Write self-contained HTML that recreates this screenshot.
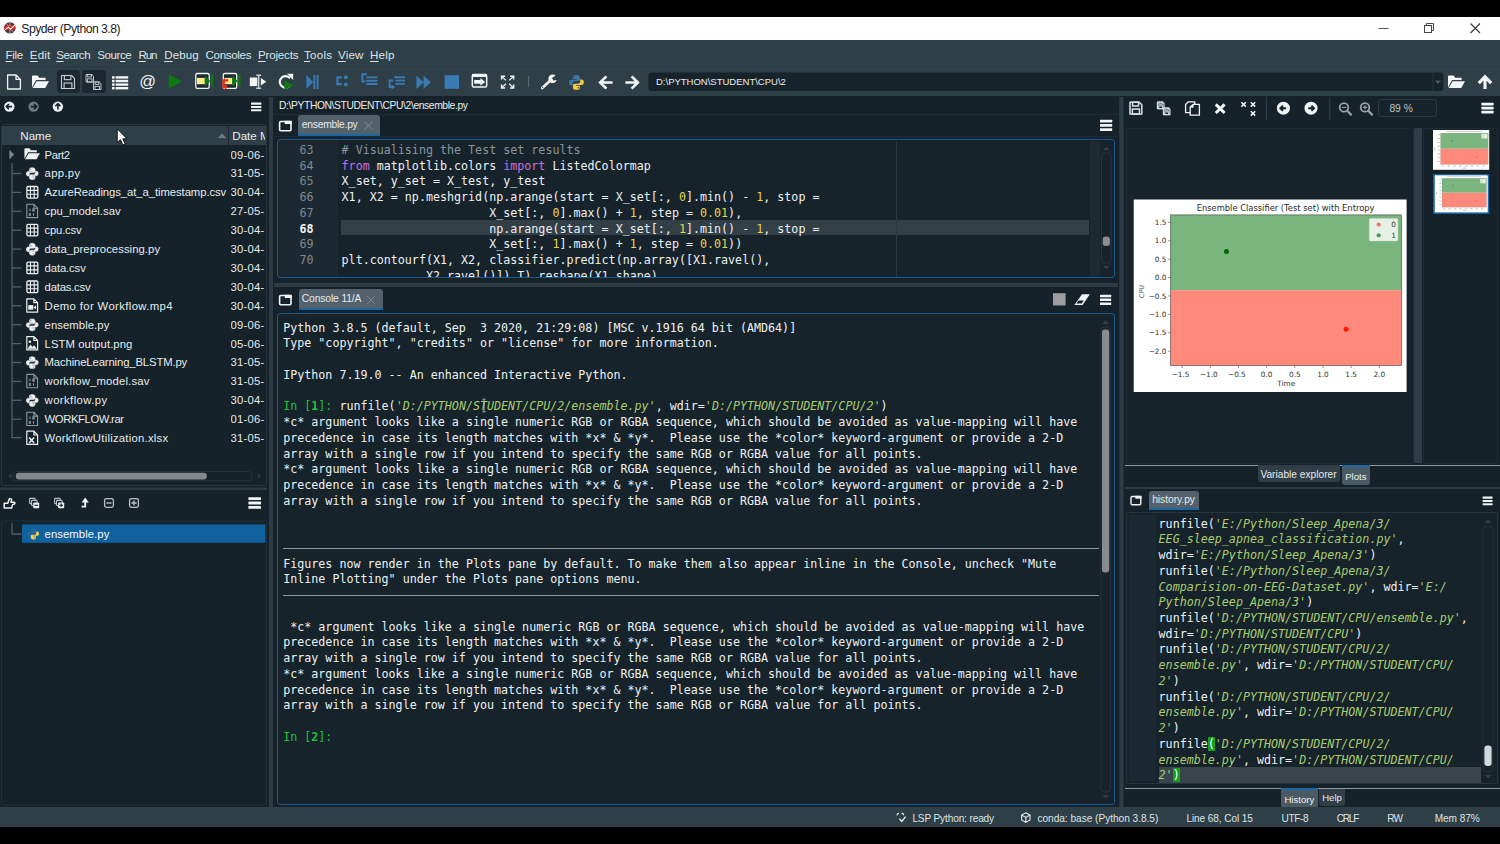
<!DOCTYPE html>
<html lang="en"><head><meta charset="utf-8"><title>Spyder (Python 3.8)</title>
<style>
*{box-sizing:border-box;margin:0;padding:0}
html,body{width:1500px;height:844px;overflow:hidden;background:#000}
body{position:relative;font-family:"Liberation Sans",sans-serif;color:#e4e8ea;font-size:11.3px}
.a{position:absolute}
.t{position:absolute;white-space:pre;line-height:1}
.mono{font-family:"DejaVu Sans Mono","Liberation Mono",monospace;font-size:11.68px;line-height:15.73px;white-space:pre}
svg{position:absolute;overflow:visible}
#title{left:0;top:17px;width:1500px;height:23px;background:#fff}
#menubar{left:0;top:40px;width:1500px;height:27px;background:#2e3f47;border-bottom:1px solid #2a3a42}
#toolbar{left:0;top:67px;width:1500px;height:28.6px;background:#2e3f47}
#main{left:0;top:95.6px;width:1500px;height:712px;background:#15222a}
#status{left:0;top:807.4px;width:1500px;height:19.8px;background:#2e3f47}
.mi{position:absolute;top:7.6px;font-size:11.6px;color:#dfe4e6;line-height:14px;white-space:pre}
.mi u{text-decoration-thickness:1px;text-underline-offset:1.5px}
.tab{position:absolute;background:#52616b;color:#e6eaec;border-radius:3px 3px 0 0;border-bottom:2px solid #1868a6;font-size:9.6px;white-space:pre}
.frame{position:absolute;border:1px solid #1c5a8f;border-radius:3px;background:#16232b}
.hist i{color:#a9cd6e}.pm{background:#12a022;color:#fff}.k{color:#c670e0}.n{color:#e7d64a}.c{color:#8a949c}.s{color:#a9cd6e;font-style:italic}.g{color:#22c13a}
.row{position:absolute;left:0;width:266px;height:19px}
.row .nm{position:absolute;left:44.5px;top:3.5px;font-size:11.2px;line-height:12px;white-space:pre;color:#e6eaec}
.row .dt{position:absolute;left:230.5px;top:3.5px;font-size:11.6px;line-height:12px;white-space:pre;color:#e6eaec;width:36px;overflow:hidden}
.st{position:absolute;top:5.9px;font-size:10.1px;line-height:11px;color:#dfe4e6;white-space:pre}
</style></head>
<body>
<div class="a" id="title">
<svg style="left:3.7px;top:4.8px" width="11.8" height="11.8" viewBox="0 0 12.4 12.4"><defs><clipPath id="spc"><circle cx="6.2" cy="6.2" r="6"/></clipPath></defs><g clip-path="url(#spc)"><rect width="12.4" height="12.4" fill="#3d3d40"/><path d="M0 4 L6 3 L12.4 3.4 V7.6 L6.4 8.6 L0 8.4 Z" fill="#e0231f"/><path d="M1.4 8 L4.6 5.4 L6.8 7.6 L11.4 3.2" stroke="#fff" stroke-width="1.1" fill="none"/><path d="M6.2 0 V4 M6.2 8.6 V12.4 M2 1.4 L5 4.4 M10.6 11 L7.6 8.4" stroke="#c9c9c9" stroke-width="0.8" fill="none"/></g></svg>
<div class="t" style="left:21.3px;top:6.2px;font-size:12.2px;letter-spacing:-0.506px;color:#222;line-height:13px">Spyder (Python 3.8)</div>
<svg style="left:1378px;top:5px" width="12" height="12"><path d="M0.5 6.5 H10.5" stroke="#555" stroke-width="1"/></svg>
<svg style="left:1424px;top:6px" width="12" height="12"><rect x="0.5" y="2.5" width="7" height="7" fill="none" stroke="#444" stroke-width="1"/><path d="M2.5 2.5 V0.5 H9.5 V7.5 H7.5" fill="none" stroke="#444" stroke-width="1"/></svg>
<svg style="left:1470px;top:6px" width="12" height="12"><path d="M0.5 0.5 L10 10 M10 0.5 L0.5 10" stroke="#333" stroke-width="1.1"/></svg>
</div>
<div class="a" id="menubar">
<span class="mi" style="left:5.6px;letter-spacing:-0.331px"><u>F</u>ile</span><span class="mi" style="left:29.8px;letter-spacing:0.170px"><u>E</u>dit</span><span class="mi" style="left:56.3px;letter-spacing:-0.491px"><u>S</u>earch</span><span class="mi" style="left:97.2px;letter-spacing:-0.431px">Sour<u>c</u>e</span><span class="mi" style="left:138.4px;letter-spacing:-1.090px"><u>R</u>un</span><span class="mi" style="left:164.2px;letter-spacing:0.054px"><u>D</u>ebug</span><span class="mi" style="left:205.5px;letter-spacing:-0.337px">C<u>o</u>nsoles</span><span class="mi" style="left:258px;letter-spacing:-0.201px"><u>P</u>rojects</span><span class="mi" style="left:304px;letter-spacing:0.230px"><u>T</u>ools</span><span class="mi" style="left:338px;letter-spacing:0.188px"><u>V</u>iew</span><span class="mi" style="left:370px;letter-spacing:0.214px"><u>H</u>elp</span>
</div>
<div class="a" id="main"></div>
<div class="a" id="toolbar"></div>
<div class="a" style="left:57px;top:70px;width:23px;height:23px;background:#1c2831;border-radius:3px"></div><div class="a" style="left:82px;top:70px;width:24px;height:23px;background:#1c2831;border-radius:3px"></div>
<svg style="left:0;top:0" width="1500" height="100" viewBox="0 0 1500 100">
<path d="M7.6 75 H16 L20.4 79.4 V89 H7.6 Z M16 75 V79.4 H20.4" fill="none" stroke="#f2f4f5" stroke-width="1.3" stroke-linejoin="round"/>
<path d="M32 87.375 V76.5 Q32 75.5 33.02 75.5 H37.61 L39.14 77.625 H45.6 V80.0 H36.08 Z" fill="#f2f4f5"/><path d="M32.68 88.0 L36.59 81.25 H49 L45.26 88.0 Z" fill="#f2f4f5"/>
<path d="M61.5 75.5 H71.64 L74.5 78.36 V88.5 H61.5 Z" fill="none" stroke="#c9d0d4" stroke-width="1.1" stroke-linejoin="round"/><rect x="64.36" y="75.5" width="6.5" height="4.16" fill="none" stroke="#c9d0d4" stroke-width="1.1"/><rect x="64.1" y="83.03999999999999" width="7.8" height="5.46" fill="none" stroke="#c9d0d4" stroke-width="1.1"/>
<path d="M86 74.5 H91.85 L93.5 76.15 V82.0 H86 Z" fill="none" stroke="#c9d0d4" stroke-width="0.9" stroke-linejoin="round"/><rect x="87.65" y="74.5" width="3.75" height="2.4" fill="none" stroke="#c9d0d4" stroke-width="0.9"/><rect x="87.5" y="78.85" width="4.5" height="3.15" fill="none" stroke="#c9d0d4" stroke-width="0.9"/><path d="M93.5 82 H99.35 L101.0 83.65 V89.5 H93.5 Z" fill="none" stroke="#c9d0d4" stroke-width="0.9" stroke-linejoin="round"/><rect x="95.15" y="82" width="3.75" height="2.4" fill="none" stroke="#c9d0d4" stroke-width="0.9"/><rect x="95.0" y="86.35" width="4.5" height="3.15" fill="none" stroke="#c9d0d4" stroke-width="0.9"/>
<rect x="112" y="76.2" width="2.6" height="2.4" fill="#f2f4f5"/><rect x="115.6" y="76.2" width="12.6" height="2.4" fill="#f2f4f5"/><rect x="112" y="79.8" width="2.6" height="2.4" fill="#f2f4f5"/><rect x="115.6" y="79.8" width="12.6" height="2.4" fill="#f2f4f5"/><rect x="112" y="83.4" width="2.6" height="2.4" fill="#f2f4f5"/><rect x="115.6" y="83.4" width="12.6" height="2.4" fill="#f2f4f5"/><rect x="112" y="87.0" width="2.6" height="2.4" fill="#f2f4f5"/><rect x="115.6" y="87.0" width="12.6" height="2.4" fill="#f2f4f5"/>
<text x="139.3" y="87" font-family="Liberation Sans, sans-serif" font-size="16.5" fill="#f2f4f5">@</text>
<path d="M168.8 74.6 L182 81.6 L168.8 88.7 Z" fill="#0c7a10"/>
<rect x="195.79999999999998" y="73.5" width="13.4" height="14.8" rx="1.6" fill="#1f2b34" stroke="#f2f4f5" stroke-width="1.3"/><rect x="197.0" y="77.9" width="7.8" height="6.3" fill="#fbeb82"/><path d="M204.79999999999998 76.3 H205.9 L210.1 81 L205.9 85.7 H204.79999999999998 Z" fill="#0c7a10"/><rect x="210.9" y="74.4" width="2.1" height="12" fill="#0c7a10"/>
<rect x="223.29999999999998" y="73.5" width="13.4" height="14.8" rx="1.6" fill="#1f2b34" stroke="#f2f4f5" stroke-width="1.3"/><rect x="224.5" y="77.9" width="7.8" height="6.3" fill="#fbeb82"/><path d="M232.29999999999998 76.3 H233.4 L237.6 81 L233.4 85.7 H232.29999999999998 Z" fill="#0c7a10"/><rect x="238.4" y="74.4" width="2.1" height="12" fill="#0c7a10"/><path d="M228.2 80.3 H223.5 V86.8 H225" fill="none" stroke="#f3281c" stroke-width="2.3"/><path d="M224.6 84 L228.2 87 L224.6 90 Z" fill="#f3281c"/>
<rect x="249.8" y="77.5" width="7.6" height="8.6" fill="#f2f4f5"/><path d="M258.7 75.2 V88.2 M256.2 75.2 H261.2 M256.2 88.2 H261.2" stroke="#c9cfd3" stroke-width="1.4" fill="none"/><path d="M260.8 78 L266.4 81.8 L260.8 85.6 Z" fill="#f2f4f5"/>
<path d="M290 78.4 A5.7 5.7 0 1 0 290.6 84.4" fill="none" stroke="#f2f4f5" stroke-width="2.2"/><path d="M287 73.8 H293.2 V80 Z" fill="#f2f4f5"/><path d="M284.4 80.6 L293.6 85.2 L284.4 90 Z" fill="#0c7a10"/>
<path d="M306.4 75 L313 82 L306.4 89 Z" fill="#3a7ab3"/><rect x="313.3" y="75" width="2" height="14" fill="#3a7ab3"/><rect x="316.6" y="75" width="2" height="14" fill="#3a7ab3"/>
<path d="M341.8 77.4 H337.4 V84.2 H341.8" fill="none" stroke="#3a7ab3" stroke-width="2.2"/><circle cx="345.8" cy="77.2" r="1.9" fill="#3a7ab3"/><circle cx="345.8" cy="84.4" r="1.9" fill="#3a7ab3"/>
<path d="M367 74.2 H362.4 V81.6 H365.4" fill="none" stroke="#3a7ab3" stroke-width="2"/><path d="M366.4 77.4 H377.4 M366.4 80.7 H377.4 M366.4 84 H377.4" stroke="#3a7ab3" stroke-width="1.9"/>
<path d="M393.2 80.6 H389.6 V87 H392" fill="none" stroke="#3a7ab3" stroke-width="2"/><path d="M391.6 84.4 L395.2 87 L391.6 89.6 Z" fill="#3a7ab3"/><path d="M394.4 77.3 H405 M395.4 80.6 H405 M395.4 83.9 H405" stroke="#3a7ab3" stroke-width="1.9"/>
<path d="M416.4 75.4 L423.6 82.2 L416.4 89 Z M423.6 75.4 L430.8 82.2 L423.6 89 Z" fill="#3a7ab3"/>
<rect x="444.6" y="75.2" width="14.4" height="13.6" fill="#3a7ab3"/>
<rect x="472.3" y="74.5" width="14.4" height="12.6" rx="1.4" fill="none" stroke="#f2f4f5" stroke-width="1.5"/><rect x="472" y="74" width="15" height="3" fill="#f2f4f5"/><path d="M474.2 80 H480.4 V78 L485.2 81.9 L480.4 85.8 V83.8 H474.2 Z" fill="#f2f4f5"/>
<path d="M501.6 79.6 V76.2 H505.2 M510 76.2 H513.6 V79.6 M513.6 84.6 V88 H510 M505.2 88 H501.6 V84.6" fill="none" stroke="#f2f4f5" stroke-width="1.5"/><path d="M502 76.6 L506 80.4 M513.2 76.6 L509.2 80.4 M513.2 87.6 L509.2 83.8 M502 87.6 L506 83.8" stroke="#f2f4f5" stroke-width="1.3"/>
<rect x="528" y="76" width="1.2" height="11" fill="#55646d"/>
<path d="M542.2 88 L550.6 80.2" stroke="#f2f4f5" stroke-width="2.6" stroke-linecap="round"/><path d="M555.6 75.6 A4.3 4.3 0 1 0 556.8 80 L553.4 80.4 L552 78 Z" fill="#f2f4f5"/><circle cx="542.6" cy="87.6" r="0.7" fill="#2f3f47"/>
<path d="M576.31 75.00 C573.16 75.00 572.88 76.30 572.88 77.41 V79.07 H576.59 V79.72 H571.40 C569.55 79.72 569.00 81.11 569.00 82.58 C569.00 84.06 569.55 85.36 571.22 85.36 H572.61 V83.33 C572.61 82.03 573.62 81.11 574.92 81.11 H578.07 C579.17 81.11 579.91 80.27 579.91 79.25 V77.41 C579.91 75.92 578.80 75.00 576.31 75.00 Z" fill="#3a7ab3"/><circle cx="574.46" cy="77.03" r="0.74" fill="#2f3f47"/><path d="M576.49 89.80 C579.64 89.80 579.91 88.50 579.91 87.39 V85.73 H576.22 V85.08 H581.39 C583.25 85.08 583.80 83.69 583.80 82.22 C583.80 80.73 583.25 79.44 581.58 79.44 H580.19 V81.47 C580.19 82.77 579.17 83.69 577.88 83.69 H574.74 C573.62 83.69 572.88 84.53 572.88 85.55 V87.39 C572.88 88.88 574.00 89.80 576.49 89.80 Z" fill="#f4c93c"/><circle cx="578.34" cy="87.77" r="0.74" fill="#2f3f47"/>
<path d="M612.6 82.5 H601.4 M606.4 76.4 L600.2 82.5 L606.4 88.6" fill="none" stroke="#f2f4f5" stroke-width="2.7" stroke-linejoin="miter"/>
<path d="M625.4 82.5 H636.6 M631.6 76.4 L637.8 82.5 L631.6 88.6" fill="none" stroke="#f2f4f5" stroke-width="2.7"/>
<rect x="648.4" y="72.4" width="795" height="18.6" rx="3" fill="#16232b"/>
<rect x="1432.6" y="72.4" width="1" height="18.6" fill="#25333c"/><path d="M1435 80.6 L1438 84 L1441 80.6 Z" fill="#4c5a63"/>
<text x="656" y="85" font-family="Liberation Sans, sans-serif" font-size="9.5" fill="#e8ecee">D:\PYTHON\STUDENT\CPU\2</text>
<path d="M1448 87.375 V76.5 Q1448 75.5 1449.02 75.5 H1453.61 L1455.14 77.625 H1461.6 V80.0 H1452.08 Z" fill="#f2f4f5"/><path d="M1448.68 88.0 L1452.59 81.25 H1465 L1461.26 88.0 Z" fill="#f2f4f5"/>
<path d="M1485 89 V78 M1478.8 83.2 L1485 76.8 L1491.2 83.2" fill="none" stroke="#f2f4f5" stroke-width="3.1"/>
</svg>
<div class="a" style="left:268.6px;top:97px;width:4.5px;height:710.4px;background:#2d3b44"></div>
<div class="a" style="left:1px;top:123.5px;width:266px;height:362px;border:1px solid #26343e;border-radius:3px"></div>
<div class="a" style="left:2px;top:125.6px;width:264px;height:19.5px;background:#2f3f48"></div>
<div class="a" style="left:228px;top:126px;width:1px;height:19px;background:#1b2730"></div>
<div class="t" style="left:20.3px;top:130px;font-size:11.6px;color:#e8ecee">Name</div><div class="t" style="left:232.3px;top:130px;font-size:11.6px;color:#e8ecee;width:33px;overflow:hidden">Date Modified</div>
<div class="t" style="left:44.6px;top:149.5px;font-size:11.3px;letter-spacing:-0.377px;color:#e6eaec">Part2</div><div class="t" style="left:230.6px;top:149.5px;font-size:11.3px;letter-spacing:0.2px;color:#e6eaec;width:35px;overflow:hidden">09-06-</div>
<div class="t" style="left:44.6px;top:168.4px;font-size:11.3px;letter-spacing:0.314px;color:#e6eaec">app.py</div><div class="t" style="left:230.6px;top:168.4px;font-size:11.3px;letter-spacing:0.2px;color:#e6eaec;width:35px;overflow:hidden">31-05-</div>
<div class="t" style="left:44.6px;top:187.3px;font-size:11.3px;letter-spacing:-0.075px;color:#e6eaec">AzureReadings_at_a_timestamp.csv</div><div class="t" style="left:230.6px;top:187.3px;font-size:11.3px;letter-spacing:0.2px;color:#e6eaec;width:35px;overflow:hidden">30-04-</div>
<div class="t" style="left:44.6px;top:206.2px;font-size:11.3px;letter-spacing:-0.001px;color:#e6eaec">cpu_model.sav</div><div class="t" style="left:230.6px;top:206.2px;font-size:11.3px;letter-spacing:0.2px;color:#e6eaec;width:35px;overflow:hidden">27-05-</div>
<div class="t" style="left:44.6px;top:225.1px;font-size:11.3px;letter-spacing:-0.218px;color:#e6eaec">cpu.csv</div><div class="t" style="left:230.6px;top:225.1px;font-size:11.3px;letter-spacing:0.2px;color:#e6eaec;width:35px;overflow:hidden">30-04-</div>
<div class="t" style="left:44.6px;top:244.0px;font-size:11.3px;letter-spacing:0.058px;color:#e6eaec">data_preprocessing.py</div><div class="t" style="left:230.6px;top:244.0px;font-size:11.3px;letter-spacing:0.2px;color:#e6eaec;width:35px;overflow:hidden">30-04-</div>
<div class="t" style="left:44.6px;top:262.9px;font-size:11.3px;letter-spacing:-0.126px;color:#e6eaec">data.csv</div><div class="t" style="left:230.6px;top:262.9px;font-size:11.3px;letter-spacing:0.2px;color:#e6eaec;width:35px;overflow:hidden">30-04-</div>
<div class="t" style="left:44.6px;top:281.8px;font-size:11.3px;letter-spacing:-0.217px;color:#e6eaec">datas.csv</div><div class="t" style="left:230.6px;top:281.8px;font-size:11.3px;letter-spacing:0.2px;color:#e6eaec;width:35px;overflow:hidden">30-04-</div>
<div class="t" style="left:44.6px;top:300.7px;font-size:11.3px;letter-spacing:0.377px;color:#e6eaec">Demo for Workflow.mp4</div><div class="t" style="left:230.6px;top:300.7px;font-size:11.3px;letter-spacing:0.2px;color:#e6eaec;width:35px;overflow:hidden">30-04-</div>
<div class="t" style="left:44.6px;top:319.6px;font-size:11.3px;letter-spacing:0.063px;color:#e6eaec">ensemble.py</div><div class="t" style="left:230.6px;top:319.6px;font-size:11.3px;letter-spacing:0.2px;color:#e6eaec;width:35px;overflow:hidden">09-06-</div>
<div class="t" style="left:44.6px;top:338.5px;font-size:11.3px;letter-spacing:0.079px;color:#e6eaec">LSTM output.png</div><div class="t" style="left:230.6px;top:338.5px;font-size:11.3px;letter-spacing:0.2px;color:#e6eaec;width:35px;overflow:hidden">05-06-</div>
<div class="t" style="left:44.6px;top:357.4px;font-size:11.3px;letter-spacing:-0.132px;color:#e6eaec">MachineLearning_BLSTM.py</div><div class="t" style="left:230.6px;top:357.4px;font-size:11.3px;letter-spacing:0.2px;color:#e6eaec;width:35px;overflow:hidden">31-05-</div>
<div class="t" style="left:44.6px;top:376.3px;font-size:11.3px;letter-spacing:0.180px;color:#e6eaec">workflow_model.sav</div><div class="t" style="left:230.6px;top:376.3px;font-size:11.3px;letter-spacing:0.2px;color:#e6eaec;width:35px;overflow:hidden">31-05-</div>
<div class="t" style="left:44.6px;top:395.2px;font-size:11.3px;letter-spacing:0.409px;color:#e6eaec">workflow.py</div><div class="t" style="left:230.6px;top:395.2px;font-size:11.3px;letter-spacing:0.2px;color:#e6eaec;width:35px;overflow:hidden">30-04-</div>
<div class="t" style="left:44.6px;top:414.1px;font-size:11.3px;letter-spacing:-0.420px;color:#e6eaec">WORKFLOW.rar</div><div class="t" style="left:230.6px;top:414.1px;font-size:11.3px;letter-spacing:0.2px;color:#e6eaec;width:35px;overflow:hidden">01-06-</div>
<div class="t" style="left:44.6px;top:433.0px;font-size:11.3px;letter-spacing:0.250px;color:#e6eaec">WorkflowUtilization.xlsx</div><div class="t" style="left:230.6px;top:433.0px;font-size:11.3px;letter-spacing:0.2px;color:#e6eaec;width:35px;overflow:hidden">31-05-</div>
<svg style="left:0;top:0" width="275" height="600" viewBox="0 0 275 600">
<circle cx="9.3" cy="106.6" r="5.2" fill="#eef1f2"/><path d="M12.100000000000001 106.6 H6.700000000000001 M8.9 104.0 L6.300000000000001 106.6 L8.9 109.19999999999999" fill="none" stroke="#15222a" stroke-width="1.6"/><circle cx="33.6" cy="106.6" r="5.2" fill="#6f7b83"/><path d="M30.8 106.6 H36.2 M34.0 104.0 L36.6 106.6 L34.0 109.19999999999999" fill="none" stroke="#15222a" stroke-width="1.6"/><circle cx="57.9" cy="106.6" r="5.2" fill="#eef1f2"/><path d="M57.9 109.39999999999999 V104.0 M55.3 106.19999999999999 L57.9 103.6 L60.5 106.19999999999999" fill="none" stroke="#15222a" stroke-width="1.6"/>
<rect x="251" y="102.60" width="10.4" height="2.1" rx="0.4" fill="#f2f4f5"/><rect x="251" y="105.90" width="10.4" height="2.1" rx="0.4" fill="#f2f4f5"/><rect x="251" y="109.20" width="10.4" height="2.1" rx="0.4" fill="#f2f4f5"/>
<path d="M218 138 L222 133.2 L226 138 Z" fill="#6f7d86"/>
<path d="M12 163 V437.6 H21.4" fill="none" stroke="#515f68" stroke-width="1.3"/>
<path d="M12 173.5 H21.4" stroke="#515f68" stroke-width="1.3"/><path d="M12 192.4 H21.4" stroke="#515f68" stroke-width="1.3"/><path d="M12 211.3 H21.4" stroke="#515f68" stroke-width="1.3"/><path d="M12 230.2 H21.4" stroke="#515f68" stroke-width="1.3"/><path d="M12 249.1 H21.4" stroke="#515f68" stroke-width="1.3"/><path d="M12 268.0 H21.4" stroke="#515f68" stroke-width="1.3"/><path d="M12 286.9 H21.4" stroke="#515f68" stroke-width="1.3"/><path d="M12 305.8 H21.4" stroke="#515f68" stroke-width="1.3"/><path d="M12 324.7 H21.4" stroke="#515f68" stroke-width="1.3"/><path d="M12 343.6 H21.4" stroke="#515f68" stroke-width="1.3"/><path d="M12 362.5 H21.4" stroke="#515f68" stroke-width="1.3"/><path d="M12 381.4 H21.4" stroke="#515f68" stroke-width="1.3"/><path d="M12 400.3 H21.4" stroke="#515f68" stroke-width="1.3"/><path d="M12 419.2 H21.4" stroke="#515f68" stroke-width="1.3"/>
<path d="M9.4 149.8 L14.2 154.6 L9.4 159.4 Z" fill="#78858d"/>
<path d="M24.4 158.75 V149.18 Q24.4 148.3 25.33 148.3 H29.515 L30.909999999999997 150.17000000000002 H36.8 V152.26000000000002 H28.119999999999997 Z" fill="#eef1f2"/><path d="M25.02 159.3 L28.585 153.36 H39.9 L36.489999999999995 159.3 Z" fill="#eef1f2"/>
<g stroke="#eef1f2" stroke-width="0.55" stroke-linejoin="round"><path d="M32.18 167.70 C29.65 167.70 29.42 168.74 29.42 169.63 V170.97 H32.40 V171.49 H28.23 C26.75 171.49 26.30 172.61 26.30 173.80 C26.30 174.99 26.75 176.03 28.08 176.03 H29.20 V174.39 C29.20 173.35 30.02 172.61 31.06 172.61 H33.59 C34.48 172.61 35.08 171.94 35.08 171.12 V169.63 C35.08 168.44 34.18 167.70 32.18 167.70 Z" fill="#eef1f2"/><circle cx="30.69" cy="169.34" r="0.60" fill="#15222a"/><path d="M32.32 179.60 C34.85 179.60 35.08 178.56 35.08 177.67 V176.33 H32.10 V175.81 H36.27 C37.75 175.81 38.20 174.69 38.20 173.50 C38.20 172.31 37.75 171.27 36.41 171.27 H35.30 V172.91 C35.30 173.95 34.48 174.69 33.44 174.69 H30.91 C30.02 174.69 29.42 175.36 29.42 176.18 V177.67 C29.42 178.86 30.32 179.60 32.32 179.60 Z" fill="#eef1f2"/><circle cx="33.81" cy="177.96" r="0.60" fill="#15222a"/></g>
<rect x="26.9" y="186.5" width="10.9" height="11.6" rx="1.3" fill="none" stroke="#eef1f2" stroke-width="1.3"/><path d="M30.45 186.5 V198.1 M34.2 186.5 V198.1 M26.9 190.29999999999998 H37.8 M26.9 194.2 H37.8" stroke="#eef1f2" stroke-width="1.15"/>
<path d="M26.799999999999997 204.29999999999998 H33.9 L37.599999999999994 208.2 V217.6 H26.799999999999997 Z M33.9 204.29999999999998 V208.2 H37.599999999999994" fill="none" stroke="#8c979e" stroke-width="1.1" stroke-linejoin="round"/><path d="M29.9 208.6 V211.2 M29.9 213.2 V215.79999999999998 M33.5 213.2 V215.79999999999998" stroke="#8c979e" stroke-width="1"/><rect x="32.699999999999996" y="208.79999999999998" width="1.6" height="2.3" fill="none" stroke="#8c979e" stroke-width="0.8"/><rect x="29.099999999999998" y="213.4" width="1.6" height="2.3" fill="none" stroke="#8c979e" stroke-width="0.6"/>
<rect x="26.9" y="224.3" width="10.9" height="11.6" rx="1.3" fill="none" stroke="#eef1f2" stroke-width="1.3"/><path d="M30.45 224.3 V235.9 M34.2 224.3 V235.9 M26.9 228.1 H37.8 M26.9 232.0 H37.8" stroke="#eef1f2" stroke-width="1.15"/>
<g stroke="#eef1f2" stroke-width="0.55" stroke-linejoin="round"><path d="M32.18 243.30 C29.65 243.30 29.42 244.34 29.42 245.23 V246.57 H32.40 V247.09 H28.23 C26.75 247.09 26.30 248.21 26.30 249.40 C26.30 250.59 26.75 251.63 28.08 251.63 H29.20 V249.99 C29.20 248.95 30.02 248.21 31.06 248.21 H33.59 C34.48 248.21 35.08 247.54 35.08 246.72 V245.23 C35.08 244.04 34.18 243.30 32.18 243.30 Z" fill="#eef1f2"/><circle cx="30.69" cy="244.94" r="0.60" fill="#15222a"/><path d="M32.32 255.20 C34.85 255.20 35.08 254.16 35.08 253.27 V251.93 H32.10 V251.41 H36.27 C37.75 251.41 38.20 250.29 38.20 249.10 C38.20 247.91 37.75 246.87 36.41 246.87 H35.30 V248.51 C35.30 249.55 34.48 250.29 33.44 250.29 H30.91 C30.02 250.29 29.42 250.96 29.42 251.78 V253.27 C29.42 254.46 30.32 255.20 32.32 255.20 Z" fill="#eef1f2"/><circle cx="33.81" cy="253.56" r="0.60" fill="#15222a"/></g>
<rect x="26.9" y="262.1" width="10.9" height="11.6" rx="1.3" fill="none" stroke="#eef1f2" stroke-width="1.3"/><path d="M30.45 262.1 V273.7 M34.2 262.1 V273.7 M26.9 265.90000000000003 H37.8 M26.9 269.8 H37.8" stroke="#eef1f2" stroke-width="1.15"/>
<rect x="26.9" y="281.0" width="10.9" height="11.6" rx="1.3" fill="none" stroke="#eef1f2" stroke-width="1.3"/><path d="M30.45 281.0 V292.59999999999997 M34.2 281.0 V292.59999999999997 M26.9 284.8 H37.8 M26.9 288.7 H37.8" stroke="#eef1f2" stroke-width="1.15"/>
<path d="M26.799999999999997 298.79999999999995 H33.9 L37.599999999999994 302.7 V312.09999999999997 H26.799999999999997 Z M33.9 298.79999999999995 V302.7 H37.599999999999994" fill="none" stroke="#eef1f2" stroke-width="1.2" stroke-linejoin="round"/><rect x="28.299999999999997" y="305.09999999999997" width="5" height="4.6" fill="#eef1f2"/><path d="M33.5 307.4 L36.099999999999994 305.29999999999995 V309.49999999999994 Z" fill="#eef1f2"/>
<g stroke="#eef1f2" stroke-width="0.55" stroke-linejoin="round"><path d="M32.18 318.90 C29.65 318.90 29.42 319.94 29.42 320.83 V322.17 H32.40 V322.69 H28.23 C26.75 322.69 26.30 323.81 26.30 325.00 C26.30 326.19 26.75 327.23 28.08 327.23 H29.20 V325.59 C29.20 324.55 30.02 323.81 31.06 323.81 H33.59 C34.48 323.81 35.08 323.14 35.08 322.32 V320.83 C35.08 319.64 34.18 318.90 32.18 318.90 Z" fill="#eef1f2"/><circle cx="30.69" cy="320.54" r="0.60" fill="#15222a"/><path d="M32.32 330.80 C34.85 330.80 35.08 329.76 35.08 328.87 V327.53 H32.10 V327.01 H36.27 C37.75 327.01 38.20 325.89 38.20 324.70 C38.20 323.51 37.75 322.47 36.41 322.47 H35.30 V324.11 C35.30 325.15 34.48 325.89 33.44 325.89 H30.91 C30.02 325.89 29.42 326.56 29.42 327.38 V328.87 C29.42 330.06 30.32 330.80 32.32 330.80 Z" fill="#eef1f2"/><circle cx="33.81" cy="329.16" r="0.60" fill="#15222a"/></g>
<path d="M26.799999999999997 336.6 H33.9 L37.599999999999994 340.50000000000006 V349.90000000000003 H26.799999999999997 Z M33.9 336.6 V340.50000000000006 H37.599999999999994" fill="none" stroke="#eef1f2" stroke-width="1.2" stroke-linejoin="round"/><path d="M27.5 348.70000000000005 L30.5 344.50000000000006 L32.5 346.90000000000003 L34.099999999999994 345.3 L36.9 348.70000000000005 Z" fill="#eef1f2"/><circle cx="29.9" cy="341.70000000000005" r="1.3" fill="#eef1f2"/>
<g stroke="#eef1f2" stroke-width="0.55" stroke-linejoin="round"><path d="M32.18 356.70 C29.65 356.70 29.42 357.74 29.42 358.63 V359.97 H32.40 V360.49 H28.23 C26.75 360.49 26.30 361.61 26.30 362.80 C26.30 363.99 26.75 365.03 28.08 365.03 H29.20 V363.39 C29.20 362.35 30.02 361.61 31.06 361.61 H33.59 C34.48 361.61 35.08 360.94 35.08 360.12 V358.63 C35.08 357.44 34.18 356.70 32.18 356.70 Z" fill="#eef1f2"/><circle cx="30.69" cy="358.34" r="0.60" fill="#15222a"/><path d="M32.32 368.60 C34.85 368.60 35.08 367.56 35.08 366.67 V365.33 H32.10 V364.81 H36.27 C37.75 364.81 38.20 363.69 38.20 362.50 C38.20 361.31 37.75 360.27 36.41 360.27 H35.30 V361.91 C35.30 362.95 34.48 363.69 33.44 363.69 H30.91 C30.02 363.69 29.42 364.36 29.42 365.18 V366.67 C29.42 367.86 30.32 368.60 32.32 368.60 Z" fill="#eef1f2"/><circle cx="33.81" cy="366.96" r="0.60" fill="#15222a"/></g>
<path d="M26.799999999999997 374.4 H33.9 L37.599999999999994 378.3 V387.7 H26.799999999999997 Z M33.9 374.4 V378.3 H37.599999999999994" fill="none" stroke="#8c979e" stroke-width="1.1" stroke-linejoin="round"/><path d="M29.9 378.7 V381.3 M29.9 383.3 V385.9 M33.5 383.3 V385.9" stroke="#8c979e" stroke-width="1"/><rect x="32.699999999999996" y="378.9" width="1.6" height="2.3" fill="none" stroke="#8c979e" stroke-width="0.8"/><rect x="29.099999999999998" y="383.5" width="1.6" height="2.3" fill="none" stroke="#8c979e" stroke-width="0.6"/>
<g stroke="#eef1f2" stroke-width="0.55" stroke-linejoin="round"><path d="M32.18 394.50 C29.65 394.50 29.42 395.54 29.42 396.43 V397.77 H32.40 V398.29 H28.23 C26.75 398.29 26.30 399.41 26.30 400.60 C26.30 401.79 26.75 402.83 28.08 402.83 H29.20 V401.19 C29.20 400.15 30.02 399.41 31.06 399.41 H33.59 C34.48 399.41 35.08 398.74 35.08 397.92 V396.43 C35.08 395.24 34.18 394.50 32.18 394.50 Z" fill="#eef1f2"/><circle cx="30.69" cy="396.14" r="0.60" fill="#15222a"/><path d="M32.32 406.40 C34.85 406.40 35.08 405.36 35.08 404.47 V403.13 H32.10 V402.61 H36.27 C37.75 402.61 38.20 401.49 38.20 400.30 C38.20 399.11 37.75 398.07 36.41 398.07 H35.30 V399.71 C35.30 400.75 34.48 401.49 33.44 401.49 H30.91 C30.02 401.49 29.42 402.16 29.42 402.98 V404.47 C29.42 405.66 30.32 406.40 32.32 406.40 Z" fill="#eef1f2"/><circle cx="33.81" cy="404.76" r="0.60" fill="#15222a"/></g>
<path d="M26.799999999999997 412.19999999999993 H33.9 L37.599999999999994 416.09999999999997 V425.49999999999994 H26.799999999999997 Z M33.9 412.19999999999993 V416.09999999999997 H37.599999999999994" fill="none" stroke="#8c979e" stroke-width="1.1" stroke-linejoin="round"/><path d="M29.9 416.49999999999994 V419.09999999999997 M29.9 421.09999999999997 V423.69999999999993 M33.5 421.09999999999997 V423.69999999999993" stroke="#8c979e" stroke-width="1"/><rect x="32.699999999999996" y="416.69999999999993" width="1.6" height="2.3" fill="none" stroke="#8c979e" stroke-width="0.8"/><rect x="29.099999999999998" y="421.29999999999995" width="1.6" height="2.3" fill="none" stroke="#8c979e" stroke-width="0.6"/>
<path d="M26.799999999999997 431.1 H33.9 L37.599999999999994 435.00000000000006 V444.40000000000003 H26.799999999999997 Z M33.9 431.1 V435.00000000000006 H37.599999999999994" fill="none" stroke="#eef1f2" stroke-width="1.2" stroke-linejoin="round"/><path d="M29.099999999999998 437.40000000000003 L34.099999999999994 443.00000000000006 M34.099999999999994 437.40000000000003 L29.099999999999998 443.00000000000006" stroke="#eef1f2" stroke-width="1.5"/>
<rect x="13" y="471.4" width="239" height="9.4" rx="3.5" fill="none" stroke="#25323c" stroke-width="1"/><rect x="15.8" y="472.7" width="191" height="6.9" rx="3" fill="#85888b"/><path d="M11.6 473.2 L8.4 476.1 L11.6 479 Z M257.8 473.2 L261 476.1 L257.8 479 Z" fill="#2b3944"/>
<rect x="0" y="487.6" width="267" height="2.6" fill="#2d3b44"/>
<path d="M4.2 503.2 H7.8 L9.4 498.8 Q11.6 498.2 11.6 500.2 L11 502.2 H14 Q15.2 502.4 14.8 503.8 L12.6 504.6 L11.6 508 H4.2 Z" fill="none" stroke="#eef1f2" stroke-width="1.5" stroke-linejoin="round"/>
<rect x="29.6" y="498.4" width="5.6" height="5.2" rx="0.8" fill="#15222a" stroke="#b9c1c6" stroke-width="1.1"/><rect x="31.5" y="500.4" width="5.6" height="5.2" rx="0.8" fill="#15222a" stroke="#b9c1c6" stroke-width="1.1"/><rect x="33.2" y="502.4" width="6" height="5.8" rx="0.9" fill="#eef1f2"/><path d="M34.4 505.3 H38.0" stroke="#15222a" stroke-width="1.1"/><rect x="54.6" y="498.4" width="5.6" height="5.2" rx="0.8" fill="#15222a" stroke="#b9c1c6" stroke-width="1.1"/><rect x="56.5" y="500.4" width="5.6" height="5.2" rx="0.8" fill="#15222a" stroke="#b9c1c6" stroke-width="1.1"/><rect x="58.2" y="502.4" width="6" height="5.8" rx="0.9" fill="#eef1f2"/><path d="M59.4 505.3 H63.0" stroke="#15222a" stroke-width="1.1"/><path d="M61.2 503.5 V507.1" stroke="#15222a" stroke-width="1.1"/>
<path d="M81.6 506.6 H85.2 V501" fill="none" stroke="#eef1f2" stroke-width="1.9"/><path d="M81.6 502.6 L85.2 497.6 L88.8 502.6 Z" fill="#eef1f2"/>
<rect x="104.6" y="498.6" width="8.8" height="8.8" rx="1.8" fill="none" stroke="#b9c1c6" stroke-width="1.3"/><path d="M106.4 503 H111.6" stroke="#b9c1c6" stroke-width="1.4"/>
<rect x="129.6" y="498.6" width="8.8" height="8.8" rx="1.8" fill="none" stroke="#b9c1c6" stroke-width="1.3"/><path d="M131.4 503 H136.6 M134 500.4 V505.6" stroke="#b9c1c6" stroke-width="1.4"/>
<rect x="248.4" y="497.20" width="12.6" height="2.8" rx="0.4" fill="#f2f4f5"/><rect x="248.4" y="501.60" width="12.6" height="2.8" rx="0.4" fill="#f2f4f5"/><rect x="248.4" y="506.00" width="12.6" height="2.8" rx="0.4" fill="#f2f4f5"/>
<rect x="1.5" y="521" width="265" height="284" rx="2" fill="none" stroke="#222e38" stroke-width="1"/>
<rect x="22" y="524.4" width="243.4" height="18.4" fill="#11619f"/>
<path d="M12 523 V534 H21.6" fill="none" stroke="#515f68" stroke-width="1.3"/>
<path d="M33.33 528.20 C30.95 528.20 30.74 529.18 30.74 530.02 V531.28 H33.54 V531.77 H29.62 C28.22 531.77 27.80 532.82 27.80 533.94 C27.80 535.06 28.22 536.04 29.48 536.04 H30.53 V534.50 C30.53 533.52 31.30 532.82 32.28 532.82 H34.66 C35.50 532.82 36.06 532.19 36.06 531.42 V530.02 C36.06 528.90 35.22 528.20 33.33 528.20 Z" fill="#2c68a0"/><circle cx="31.93" cy="529.74" r="0.56" fill="#11619f"/><path d="M33.47 539.40 C35.85 539.40 36.06 538.42 36.06 537.58 V536.32 H33.26 V535.83 H37.18 C38.58 535.83 39.00 534.78 39.00 533.66 C39.00 532.54 38.58 531.56 37.32 531.56 H36.27 V533.10 C36.27 534.08 35.50 534.78 34.52 534.78 H32.14 C31.30 534.78 30.74 535.41 30.74 536.18 V537.58 C30.74 538.70 31.58 539.40 33.47 539.40 Z" fill="#f6d047"/><circle cx="34.87" cy="537.86" r="0.56" fill="#11619f"/>
</svg>
<div class="t" style="left:44.6px;top:528.7px;font-size:11.3px;letter-spacing:0.063px;color:#f4f6f7">ensemble.py</div>
<svg style="left:116px;top:128px" width="14" height="20" viewBox="0 0 14 20"><path d="M1.2 0.8 V14.6 L4.4 11.6 L6.8 17 L9.2 16 L6.8 10.8 H11 Z" fill="#fff" stroke="#111" stroke-width="1"/></svg>
<div class="t" style="left:279px;top:101.2px;font-size:10.3px;letter-spacing:-0.384px;color:#e8ecee">D:\PYTHON\STUDENT\CPU\2\ensemble.py</div>
<div class="a" style="left:274px;top:113.6px;width:844px;height:1px;background:#212d36"></div><div class="a" style="left:274px;top:136px;width:844px;height:1px;background:#212d36"></div>
<div class="tab" style="left:298.4px;top:114.6px;width:81.6px;height:21px"><span class="t" style="left:3.4px;top:5px;font-size:10.3px;letter-spacing:-0.240px">ensemble.py</span></div>
<div class="frame" style="left:277px;top:139px;width:838px;height:138.6px;overflow:hidden">
<div class="a" style="left:1px;top:1px;width:59px;height:136px;background:#1d2932"></div><div class="a" style="left:63px;top:79.8px;width:748.4px;height:15.7px;background:#333f47"></div><div class="a" style="left:617.6px;top:1px;width:1px;height:136px;background:#2a3740"></div><div class="a" style="left:812px;top:1px;width:10px;height:136px;background:#1e2a33"></div>
<div class="a mono" style="left:21.4px;top:3.00px;color:#7d8991;">63</div><div class="a mono" style="left:63.6px;top:3.00px;color:#eef1f2"><span class="c"># Visualising the Test set results</span></div>
<div class="a mono" style="left:21.4px;top:18.73px;color:#7d8991;">64</div><div class="a mono" style="left:63.6px;top:18.73px;color:#eef1f2"><span class="k">from</span> matplotlib.colors <span class="k">import</span> ListedColormap</div>
<div class="a mono" style="left:21.4px;top:34.46px;color:#7d8991;">65</div><div class="a mono" style="left:63.6px;top:34.46px;color:#eef1f2">X_set, y_set = X_test, y_test</div>
<div class="a mono" style="left:21.4px;top:50.19px;color:#7d8991;">66</div><div class="a mono" style="left:63.6px;top:50.19px;color:#eef1f2">X1, X2 = np.meshgrid(np.arange(start = X_set[:, <span class="n">0</span>].min() - <span class="n">1</span>, stop =</div>
<div class="a mono" style="left:21.4px;top:65.92px;color:#7d8991;">67</div><div class="a mono" style="left:63.6px;top:65.92px;color:#eef1f2">                     X_set[:, <span class="n">0</span>].max() + <span class="n">1</span>, step = <span class="n">0.01</span>),</div>
<div class="a mono" style="left:21.4px;top:81.65px;font-weight:bold;color:#f2f4f5;">68</div><div class="a mono" style="left:63.6px;top:81.65px;color:#eef1f2">                     np.arange(start = X_set[:, <span class="n">1</span>].min() - <span class="n">1</span>, stop =</div>
<div class="a mono" style="left:21.4px;top:97.38px;color:#7d8991;">69</div><div class="a mono" style="left:63.6px;top:97.38px;color:#eef1f2">                     X_set[:, <span class="n">1</span>].max() + <span class="n">1</span>, step = <span class="n">0.01</span>))</div>
<div class="a mono" style="left:21.4px;top:113.11px;color:#7d8991;">70</div><div class="a mono" style="left:63.6px;top:113.11px;color:#eef1f2">plt.contourf(X1, X2, classifier.predict(np.array([X1.ravel(),</div>
<div class="a mono" style="left:63.6px;top:128.84px;color:#eef1f2">            X2.ravel()]).T).reshape(X1.shape),</div>
</div>
<div class="a" style="left:274px;top:282.5px;width:844px;height:4.4px;background:#2d3b44"></div>
<div class="tab" style="left:298.6px;top:288.6px;width:84.6px;height:21px"><span class="t" style="left:3.2px;top:5px;font-size:10.3px;letter-spacing:-0.125px">Console 11/A</span></div>
<div class="frame" style="left:277px;top:313px;width:838px;height:492.4px;overflow:hidden">
<div class="a mono" style="left:5.2px;top:6.7px;color:#eef1f2">Python 3.8.5 (default, Sep  3 2020, 21:29:08) [MSC v.1916 64 bit (AMD64)]
Type "copyright", "credits" or "license" for more information.

IPython 7.19.0 -- An enhanced Interactive Python.

<span class="g">In [<b>1</b>]:</span> runfile(<span class="s">'D:/PYTHON/STUDENT/CPU/2/ensemble.py'</span>, wdir=<span class="s">'D:/PYTHON/STUDENT/CPU/2'</span>)
*c* argument looks like a single numeric RGB or RGBA sequence, which should be avoided as value-mapping will have
precedence in case its length matches with *x* &amp; *y*.  Please use the *color* keyword-argument or provide a 2-D
array with a single row if you intend to specify the same RGB or RGBA value for all points.
*c* argument looks like a single numeric RGB or RGBA sequence, which should be avoided as value-mapping will have
precedence in case its length matches with *x* &amp; *y*.  Please use the *color* keyword-argument or provide a 2-D
array with a single row if you intend to specify the same RGB or RGBA value for all points.



Figures now render in the Plots pane by default. To make them also appear inline in the Console, uncheck "Mute
Inline Plotting" under the Plots pane options menu.


 *c* argument looks like a single numeric RGB or RGBA sequence, which should be avoided as value-mapping will have
precedence in case its length matches with *x* &amp; *y*.  Please use the *color* keyword-argument or provide a 2-D
array with a single row if you intend to specify the same RGB or RGBA value for all points.
*c* argument looks like a single numeric RGB or RGBA sequence, which should be avoided as value-mapping will have
precedence in case its length matches with *x* &amp; *y*.  Please use the *color* keyword-argument or provide a 2-D
array with a single row if you intend to specify the same RGB or RGBA value for all points.

<span class="g">In [<b>2</b>]:</span> </div>
<div class="a" style="left:5px;top:233.6px;width:816px;height:1px;background:#8b959b"></div><div class="a" style="left:5px;top:280.8px;width:816px;height:1px;background:#8b959b"></div>
</div>
<svg style="left:0;top:0" width="1130" height="810" viewBox="0 0 1130 810">
<rect x="279.6" y="121.5" width="11.4" height="9.2" rx="1.2" fill="none" stroke="#f2f4f5" stroke-width="1.6"/><rect x="284.80" y="120.8" width="7.00" height="3.22" fill="#f2f4f5"/><rect x="279.6" y="295.5" width="11.4" height="9.2" rx="1.2" fill="none" stroke="#f2f4f5" stroke-width="1.6"/><rect x="284.80" y="294.8" width="7.00" height="3.22" fill="#f2f4f5"/>
<path d="M364.4 121.6 L372.4 129.8 M372.4 121.6 L364.4 129.8 M367 296 L375 304.2 M375 296 L367 304.2" stroke="#7b8992" stroke-width="1"/>
<rect x="1100" y="119.80" width="12.2" height="2.7" rx="0.4" fill="#f2f4f5"/><rect x="1100" y="124.00" width="12.2" height="2.7" rx="0.4" fill="#f2f4f5"/><rect x="1100" y="128.20" width="12.2" height="2.7" rx="0.4" fill="#f2f4f5"/><rect x="1100" y="294.80" width="11.2" height="2.5" rx="0.4" fill="#f2f4f5"/><rect x="1100" y="298.60" width="11.2" height="2.5" rx="0.4" fill="#f2f4f5"/><rect x="1100" y="302.40" width="11.2" height="2.5" rx="0.4" fill="#f2f4f5"/>
<rect x="1101.5" y="153" width="9.6" height="110" rx="3.5" fill="none" stroke="#27343e" stroke-width="1"/><path d="M1102.9 150 L1106.3 146.6 L1109.7 150 Z M1102.9 266 L1106.3 269.4 L1109.7 266 Z" fill="#313e48"/><rect x="1102.7" y="236.6" width="7.2" height="9.400000000000006" rx="3" fill="#8a8c8f"/>
<rect x="1100.8" y="327" width="9.6" height="465" rx="3.5" fill="none" stroke="#27343e" stroke-width="1"/><path d="M1102.2 324 L1105.6 320.6 L1109.0 324 Z M1102.2 795 L1105.6 798.4 L1109.0 795 Z" fill="#313e48"/><rect x="1102.0" y="329.6" width="7.2" height="242.79999999999995" rx="3" fill="#8a8c8f"/>
<rect x="1053" y="293.2" width="12.6" height="12.3" fill="#9a9c9e"/>
<path d="M1082 294.2 H1089.8 L1082.6 305 H1074.4 Z" fill="#f2f4f5"/><path d="M1078.4 300.6 H1083.8 L1081.8 303.6 H1076.4 Z" fill="#15222a"/>
<path d="M484 399.6 V411.4 M482.4 399.2 H485.6 M482.4 411.8 H485.6" stroke="#b8bec2" stroke-width="0.9" fill="none"/>
<rect x="1119.2" y="97" width="4.4" height="710.4" fill="#2d3b44"/>
</svg>
<div class="a" style="left:1125.6px;top:127.5px;width:288.6px;height:336px;background:#16232b;border:1px solid #1f2b35;border-radius:3px"></div>
<div class="a" style="left:1414.2px;top:128px;width:8.2px;height:335px;background:#2e3d47"></div>
<div class="a" style="left:1423px;top:127.5px;width:75px;height:336px;background:#15222a;border:1px solid #1f2b35;border-radius:3px"></div>
<div class="a" style="left:1378.4px;top:98.8px;width:58.4px;height:18.6px;background:#16232b;border:1px solid #2b3843;border-radius:3px"></div><div class="t" style="left:1389.4px;top:104px;font-size:10.3px;color:#bcc4c9">89 %</div>
<div class="a" style="left:1125px;top:464.9px;width:375px;height:1px;background:#8e989e"></div><div class="a" style="left:1258px;top:465.2px;width:82.4px;height:17.2px;background:#2f3e47;border-radius:0 0 3px 3px"></div><div class="t" style="left:1260.4px;top:470.3px;font-size:10.1px;letter-spacing:0.037px;color:#e8ecee">Variable explorer</div><div class="a" style="left:1342.2px;top:464.9px;width:27.6px;height:20px;background:#4a5a64;border-top:2px solid #1868a6;border-radius:0 0 3px 3px"></div><div class="t" style="left:1345.2px;top:472.2px;font-size:9.6px;color:#eef1f2">Plots</div>
<div class="a" style="left:1125px;top:486.6px;width:375px;height:2.6px;background:#2d3b44"></div>
<div class="tab" style="left:1149px;top:491.2px;width:49.6px;height:18.6px"><span class="t" style="left:3.2px;top:3.6px;font-size:10.3px;letter-spacing:-0.057px">history.py</span></div>
<div class="frame" style="left:1126.4px;top:512.4px;width:371.2px;height:271.4px;border-color:#26343e;overflow:hidden">
<div class="a" style="left:2px;top:2px;width:27px;height:266px;background:#1d2932"></div><div class="a" style="left:31.4px;top:253.8px;width:322px;height:15.4px;background:#3a454b"></div>
<div class="a mono hist" style="left:31.2px;top:3.2px;color:#eef1f2">runfile(<i>'E:/Python/Sleep_Apena/3/</i>
<i>EEG_sleep_apnea_classification.py'</i>,
wdir=<i>'E:/Python/Sleep_Apena/3'</i>)
runfile(<i>'E:/Python/Sleep_Apena/3/</i>
<i>Comparision-on-EEG-Dataset.py'</i>, wdir=<i>'E:/</i>
<i>Python/Sleep_Apena/3'</i>)
runfile(<i>'D:/PYTHON/STUDENT/CPU/ensemble.py'</i>,
wdir=<i>'D:/PYTHON/STUDENT/CPU'</i>)
runfile(<i>'D:/PYTHON/STUDENT/CPU/2/</i>
<i>ensemble.py'</i>, wdir=<i>'D:/PYTHON/STUDENT/CPU/</i>
<i>2'</i>)
runfile(<i>'D:/PYTHON/STUDENT/CPU/2/</i>
<i>ensemble.py'</i>, wdir=<i>'D:/PYTHON/STUDENT/CPU/</i>
<i>2'</i>)
runfile<span class="pm">(</span><i>'D:/PYTHON/STUDENT/CPU/2/</i>
<i>ensemble.py'</i>, wdir=<i>'D:/PYTHON/STUDENT/CPU/</i>
<i>2'</i><span class="pm">)</span></div>
</div>
<div class="a" style="left:1125px;top:788px;width:375px;height:1px;background:#8e989e"></div><div class="a" style="left:1281.4px;top:788px;width:36.8px;height:19.6px;background:#4a5a64;border-top:2px solid #1868a6;border-radius:0 0 3px 3px"></div><div class="t" style="left:1284.4px;top:794.6px;font-size:9.6px;color:#eef1f2">History</div><div class="a" style="left:1319.4px;top:789px;width:25.4px;height:16.8px;background:#2f3e47;border-radius:0 0 3px 3px"></div><div class="t" style="left:1322.2px;top:793px;font-size:9.6px;color:#e8ecee">Help</div>
<svg style="left:1120px;top:90px" width="380" height="720" viewBox="1120 90 380 720">
<path d="M1130 102.2 H1139.204 L1141.8 104.796 V114.0 H1130 Z" fill="none" stroke="#dde2e5" stroke-width="1.5" stroke-linejoin="round"/><rect x="1132.596" y="102.2" width="5.9" height="3.7760000000000002" fill="none" stroke="#dde2e5" stroke-width="1.5"/><rect x="1132.36" y="109.044" width="7.08" height="4.956" fill="none" stroke="#dde2e5" stroke-width="1.5"/><path d="M1157.4 102 H1162.548 L1164.0 103.452 V108.6 H1157.4 Z" fill="none" stroke="#d5dbde" stroke-width="1.2" stroke-linejoin="round"/><rect x="1158.852" y="102" width="3.3" height="2.112" fill="none" stroke="#d5dbde" stroke-width="1.2"/><rect x="1158.72" y="105.828" width="3.9599999999999995" height="2.772" fill="none" stroke="#d5dbde" stroke-width="1.2"/><path d="M1163.4 108 H1168.548 L1170.0 109.452 V114.6 H1163.4 Z" fill="none" stroke="#d5dbde" stroke-width="1.2" stroke-linejoin="round"/><rect x="1164.852" y="108" width="3.3" height="2.112" fill="none" stroke="#d5dbde" stroke-width="1.2"/><rect x="1164.72" y="111.828" width="3.9599999999999995" height="2.772" fill="none" stroke="#d5dbde" stroke-width="1.2"/><path d="M1185.6 104.4 L1188.4 101.8 H1194.8 V112.6 H1185.6 Z" fill="#15222a" stroke="#f2f4f5" stroke-width="1.3" stroke-linejoin="round"/><path d="M1190.2 107 L1193 104.4 H1199.4 V115.2 H1190.2 Z M1190.2 107 H1193 V104.4" fill="#15222a" stroke="#f2f4f5" stroke-width="1.3" stroke-linejoin="round"/>
<path d="M1215.8 104.4 L1224.6 113 M1224.6 104.4 L1215.8 113" stroke="#f2f4f5" stroke-width="3"/>
<path d="M1241.3999999999999 102.2 L1245.8 106.60000000000001 M1245.8 102.2 L1241.3999999999999 106.60000000000001" stroke="#f2f4f5" stroke-width="1.5"/><path d="M1250.8 102.2 L1255.2 106.60000000000001 M1255.2 102.2 L1250.8 106.60000000000001" stroke="#f2f4f5" stroke-width="1.5"/><path d="M1250.8 111.2 L1255.2 115.60000000000001 M1255.2 111.2 L1250.8 115.60000000000001" stroke="#f2f4f5" stroke-width="1.5"/>
<rect x="1265.8" y="97" width="1.2" height="23" fill="#2c3a44"/><rect x="1329.2" y="97" width="1.2" height="23" fill="#2c3a44"/>
<circle cx="1283.4" cy="108.2" r="6.5" fill="#f2f4f5"/><path d="M1286.2 108.2 H1280.8000000000002 M1283.0 105.60000000000001 L1280.4 108.2 L1283.0 110.8" fill="none" stroke="#15222a" stroke-width="2"/><circle cx="1311" cy="108.2" r="6.5" fill="#f2f4f5"/><path d="M1308.2 108.2 H1313.6 M1311.4 105.60000000000001 L1314 108.2 L1311.4 110.8" fill="none" stroke="#15222a" stroke-width="2"/>
<circle cx="1344" cy="107.4" r="4.3" fill="none" stroke="#9aa4aa" stroke-width="1.8"/><path d="M1347.2 110.8 L1351.6 115.2" stroke="#9aa4aa" stroke-width="2.3"/><path d="M1341.8 107.4 H1346.2" stroke="#9aa4aa" stroke-width="1.1"/>
<circle cx="1365" cy="107.4" r="4.3" fill="none" stroke="#9aa4aa" stroke-width="1.8"/><path d="M1368.2 110.8 L1372.6 115.2" stroke="#9aa4aa" stroke-width="2.3"/><path d="M1362.8 107.4 H1367.2 M1365 105.2 V109.6" stroke="#9aa4aa" stroke-width="1.1"/>
<rect x="1481.4" y="102.80" width="12.2" height="2.7" rx="0.4" fill="#f2f4f5"/><rect x="1481.4" y="106.80" width="12.2" height="2.7" rx="0.4" fill="#f2f4f5"/><rect x="1481.4" y="110.80" width="12.2" height="2.7" rx="0.4" fill="#f2f4f5"/>
<rect x="1133.7" y="199.5" width="272.9" height="192.5" fill="#fff"/><rect x="1170.50" y="214.90" width="231.10" height="75.30" fill="#7ab57d"/><rect x="1170.50" y="290.20" width="231.10" height="75.40" fill="#ff8a7c"/><rect x="1170.50" y="214.90" width="231.10" height="150.70" fill="none" stroke="#444" stroke-width="0.60"/><circle cx="1226.50" cy="251.40" r="2.50" fill="#006400"/><circle cx="1346.10" cy="329.30" r="2.50" fill="#ff1a00"/><rect x="1369.30" y="218.60" width="28.60" height="22.40" rx="1.00" fill="#e6f1e6" stroke="#cfdccf" stroke-width="0.40"/><circle cx="1378.70" cy="224.60" r="2.10" fill="#f4735f"/><circle cx="1378.70" cy="235.30" r="2.10" fill="#4f9a52"/><text x="1393.60" y="227.40" font-family="DejaVu Sans, Liberation Sans, sans-serif" font-size="7.30" fill="#333" text-anchor="middle">0</text><text x="1393.60" y="238.10" font-family="DejaVu Sans, Liberation Sans, sans-serif" font-size="7.30" fill="#333" text-anchor="middle">1</text><text x="1285.60" y="211.20" font-family="DejaVu Sans, Liberation Sans, sans-serif" font-size="8.34" fill="#2a2a2a" text-anchor="middle">Ensemble Classifier (Test set) with Entropy</text><text x="1166.40" y="224.90" font-family="DejaVu Sans, Liberation Sans, sans-serif" font-size="7.30" fill="#333" text-anchor="end">1.5</text><path d="M1168.20 222.30 H1170.50" stroke="#444" stroke-width="0.6"/><text x="1166.40" y="243.32" font-family="DejaVu Sans, Liberation Sans, sans-serif" font-size="7.30" fill="#333" text-anchor="end">1.0</text><path d="M1168.20 240.72 H1170.50" stroke="#444" stroke-width="0.6"/><text x="1166.40" y="261.74" font-family="DejaVu Sans, Liberation Sans, sans-serif" font-size="7.30" fill="#333" text-anchor="end">0.5</text><path d="M1168.20 259.14 H1170.50" stroke="#444" stroke-width="0.6"/><text x="1166.40" y="280.16" font-family="DejaVu Sans, Liberation Sans, sans-serif" font-size="7.30" fill="#333" text-anchor="end">0.0</text><path d="M1168.20 277.56 H1170.50" stroke="#444" stroke-width="0.6"/><text x="1166.40" y="298.58" font-family="DejaVu Sans, Liberation Sans, sans-serif" font-size="7.30" fill="#333" text-anchor="end">−0.5</text><path d="M1168.20 295.98 H1170.50" stroke="#444" stroke-width="0.6"/><text x="1166.40" y="317.00" font-family="DejaVu Sans, Liberation Sans, sans-serif" font-size="7.30" fill="#333" text-anchor="end">−1.0</text><path d="M1168.20 314.40 H1170.50" stroke="#444" stroke-width="0.6"/><text x="1166.40" y="335.42" font-family="DejaVu Sans, Liberation Sans, sans-serif" font-size="7.30" fill="#333" text-anchor="end">−1.5</text><path d="M1168.20 332.82 H1170.50" stroke="#444" stroke-width="0.6"/><text x="1166.40" y="353.84" font-family="DejaVu Sans, Liberation Sans, sans-serif" font-size="7.30" fill="#333" text-anchor="end">−2.0</text><path d="M1168.20 351.24 H1170.50" stroke="#444" stroke-width="0.6"/><text x="1180.60" y="376.70" font-family="DejaVu Sans, Liberation Sans, sans-serif" font-size="7.30" fill="#333" text-anchor="middle">−1.5</text><path d="M1182.20 365.60 V368.00" stroke="#444" stroke-width="0.6"/><text x="1208.75" y="376.70" font-family="DejaVu Sans, Liberation Sans, sans-serif" font-size="7.30" fill="#333" text-anchor="middle">−1.0</text><path d="M1210.35 365.60 V368.00" stroke="#444" stroke-width="0.6"/><text x="1236.90" y="376.70" font-family="DejaVu Sans, Liberation Sans, sans-serif" font-size="7.30" fill="#333" text-anchor="middle">−0.5</text><path d="M1238.50 365.60 V368.00" stroke="#444" stroke-width="0.6"/><text x="1266.65" y="376.70" font-family="DejaVu Sans, Liberation Sans, sans-serif" font-size="7.30" fill="#333" text-anchor="middle">0.0</text><path d="M1266.65 365.60 V368.00" stroke="#444" stroke-width="0.6"/><text x="1294.80" y="376.70" font-family="DejaVu Sans, Liberation Sans, sans-serif" font-size="7.30" fill="#333" text-anchor="middle">0.5</text><path d="M1294.80 365.60 V368.00" stroke="#444" stroke-width="0.6"/><text x="1322.95" y="376.70" font-family="DejaVu Sans, Liberation Sans, sans-serif" font-size="7.30" fill="#333" text-anchor="middle">1.0</text><path d="M1322.95 365.60 V368.00" stroke="#444" stroke-width="0.6"/><text x="1351.10" y="376.70" font-family="DejaVu Sans, Liberation Sans, sans-serif" font-size="7.30" fill="#333" text-anchor="middle">1.5</text><path d="M1351.10 365.60 V368.00" stroke="#444" stroke-width="0.6"/><text x="1379.25" y="376.70" font-family="DejaVu Sans, Liberation Sans, sans-serif" font-size="7.30" fill="#333" text-anchor="middle">2.0</text><path d="M1379.25 365.60 V368.00" stroke="#444" stroke-width="0.6"/><text x="1286.20" y="386.20" font-family="DejaVu Sans, Liberation Sans, sans-serif" font-size="7.30" fill="#333" text-anchor="middle">Time</text><text transform="translate(1143.80 291.50) rotate(-90)" font-family="DejaVu Sans, Liberation Sans, sans-serif" font-size="6.57" fill="#555" text-anchor="middle">CPU</text>
<rect x="1433" y="130" width="56.2" height="39.8" fill="#fff"/><rect x="1440.58" y="133.18" width="47.59" height="15.57" fill="#7ab57d"/><rect x="1440.58" y="148.75" width="47.59" height="15.59" fill="#ff8a7c"/><rect x="1440.58" y="133.18" width="47.59" height="31.16" fill="none" stroke="#444" stroke-width="0.12"/><circle cx="1452.11" cy="140.73" r="0.51" fill="#006400"/><circle cx="1476.74" cy="156.84" r="0.51" fill="#ff1a00"/><rect x="1481.52" y="133.95" width="5.89" height="4.63" rx="0.21" fill="#e6f1e6" stroke="#cfdccf" stroke-width="0.08"/><circle cx="1483.45" cy="135.19" r="0.43" fill="#f4735f"/><circle cx="1483.45" cy="137.40" r="0.43" fill="#4f9a52"/><rect x="1445.83" y="131.14" width="36.66" height="0.83" fill="#c9c9c9"/><rect x="1437.59" y="134.30" width="2.27" height="0.93" fill="#bdbdbd"/><rect x="1441.75" y="165.56" width="2.47" height="1.03" fill="#bdbdbd"/><rect x="1437.59" y="138.11" width="2.27" height="0.93" fill="#bdbdbd"/><rect x="1447.55" y="165.56" width="2.47" height="1.03" fill="#bdbdbd"/><rect x="1437.59" y="141.92" width="2.27" height="0.93" fill="#bdbdbd"/><rect x="1453.35" y="165.56" width="2.47" height="1.03" fill="#bdbdbd"/><rect x="1437.59" y="145.73" width="2.27" height="0.93" fill="#bdbdbd"/><rect x="1459.14" y="165.56" width="2.47" height="1.03" fill="#bdbdbd"/><rect x="1437.59" y="149.53" width="2.27" height="0.93" fill="#bdbdbd"/><rect x="1464.94" y="165.56" width="2.47" height="1.03" fill="#bdbdbd"/><rect x="1437.59" y="153.34" width="2.27" height="0.93" fill="#bdbdbd"/><rect x="1470.74" y="165.56" width="2.47" height="1.03" fill="#bdbdbd"/><rect x="1437.59" y="157.15" width="2.27" height="0.93" fill="#bdbdbd"/><rect x="1476.53" y="165.56" width="2.47" height="1.03" fill="#bdbdbd"/><rect x="1437.59" y="160.96" width="2.27" height="0.93" fill="#bdbdbd"/><rect x="1482.33" y="165.56" width="2.47" height="1.03" fill="#bdbdbd"/><rect x="1462.72" y="167.53" width="3.29" height="1.03" fill="#c4c4c4"/><rect x="1434.09" y="147.47" width="1.03" height="2.89" fill="#c4c4c4"/>
<rect x="1434" y="175" width="54.4" height="38" fill="#fff" stroke="#1a6db0" stroke-width="1.6"/><rect x="1435" y="175.4" width="52.4" height="36.8" fill="#fff"/><rect x="1442.07" y="178.34" width="44.37" height="14.40" fill="#7ab57d"/><rect x="1442.07" y="192.74" width="44.37" height="14.41" fill="#ff8a7c"/><rect x="1442.07" y="178.34" width="44.37" height="28.81" fill="none" stroke="#444" stroke-width="0.12"/><circle cx="1452.82" cy="185.32" r="0.48" fill="#006400"/><circle cx="1475.78" cy="200.21" r="0.48" fill="#ff1a00"/><rect x="1480.24" y="179.05" width="5.49" height="4.28" rx="0.19" fill="#e6f1e6" stroke="#cfdccf" stroke-width="0.08"/><circle cx="1482.04" cy="180.20" r="0.40" fill="#f4735f"/><circle cx="1482.04" cy="182.24" r="0.40" fill="#4f9a52"/><rect x="1446.96" y="176.45" width="34.18" height="0.76" fill="#c9c9c9"/><rect x="1439.28" y="179.38" width="2.11" height="0.86" fill="#bdbdbd"/><rect x="1443.16" y="208.28" width="2.30" height="0.96" fill="#bdbdbd"/><rect x="1439.28" y="182.90" width="2.11" height="0.86" fill="#bdbdbd"/><rect x="1448.57" y="208.28" width="2.30" height="0.96" fill="#bdbdbd"/><rect x="1439.28" y="186.42" width="2.11" height="0.86" fill="#bdbdbd"/><rect x="1453.97" y="208.28" width="2.30" height="0.96" fill="#bdbdbd"/><rect x="1439.28" y="189.94" width="2.11" height="0.86" fill="#bdbdbd"/><rect x="1459.38" y="208.28" width="2.30" height="0.96" fill="#bdbdbd"/><rect x="1439.28" y="193.46" width="2.11" height="0.86" fill="#bdbdbd"/><rect x="1464.78" y="208.28" width="2.30" height="0.96" fill="#bdbdbd"/><rect x="1439.28" y="196.98" width="2.11" height="0.86" fill="#bdbdbd"/><rect x="1470.19" y="208.28" width="2.30" height="0.96" fill="#bdbdbd"/><rect x="1439.28" y="200.50" width="2.11" height="0.86" fill="#bdbdbd"/><rect x="1475.59" y="208.28" width="2.30" height="0.96" fill="#bdbdbd"/><rect x="1439.28" y="204.03" width="2.11" height="0.86" fill="#bdbdbd"/><rect x="1481.00" y="208.28" width="2.30" height="0.96" fill="#bdbdbd"/><rect x="1462.71" y="210.10" width="3.07" height="0.96" fill="#c4c4c4"/><rect x="1436.02" y="191.55" width="0.96" height="2.68" fill="#c4c4c4"/>
<rect x="1131.0" y="496.5" width="9.8" height="8.2" rx="1.2" fill="none" stroke="#f2f4f5" stroke-width="1.4"/><rect x="1135.40" y="495.8" width="6.20" height="2.87" fill="#f2f4f5"/><rect x="1482.6" y="496.60" width="10" height="2.1" rx="0.4" fill="#f2f4f5"/><rect x="1482.6" y="499.90" width="10" height="2.1" rx="0.4" fill="#f2f4f5"/><rect x="1482.6" y="503.20" width="10" height="2.1" rx="0.4" fill="#f2f4f5"/>
<rect x="1483.2" y="526" width="9.6" height="246" rx="3.5" fill="none" stroke="#27343e" stroke-width="1"/><path d="M1484.6000000000001 523 L1488.0 519.6 L1491.4 523 Z M1484.6000000000001 775 L1488.0 778.4 L1491.4 775 Z" fill="#313e48"/><rect x="1484.4" y="745.6" width="7.2" height="20.399999999999977" rx="3" fill="#d3d8db"/>
</svg>
<div class="a" id="status">
<span class="st" style="left:912.4px;letter-spacing:-0.140px">LSP Python: ready</span><span class="st" style="left:1037.4px;letter-spacing:-0.011px">conda: base (Python 3.8.5)</span><span class="st" style="left:1186.4px;letter-spacing:-0.096px">Line 68, Col 15</span><span class="st" style="left:1281.6px;letter-spacing:-0.379px">UTF-8</span><span class="st" style="left:1336.8px;letter-spacing:-1.258px">CRLF</span><span class="st" style="left:1387.3px;letter-spacing:-0.944px">RW</span><span class="st" style="left:1434.7px;letter-spacing:-0.061px">Mem 87%</span>
<svg style="left:896px;top:5px" width="140" height="12" viewBox="0 0 140 12"><path d="M3.4 6.8 L5.8 9.4 L9.6 4.6" fill="none" stroke="#e8ecee" stroke-width="1.3"/><path d="M1.2 3.4 Q1 1.4 3 1.4 M5.6 1.4 Q7.6 1.2 7.6 3.2" fill="none" stroke="#e8ecee" stroke-width="1.2"/><path d="M129.8 0.8 L134 3 V8 L129.8 10.4 L125.6 8 V3 Z M125.6 3 L129.8 5.4 L134 3 M129.8 5.4 V10.4" fill="none" stroke="#e8ecee" stroke-width="1.1"/></svg>
</div>
</body></html>
